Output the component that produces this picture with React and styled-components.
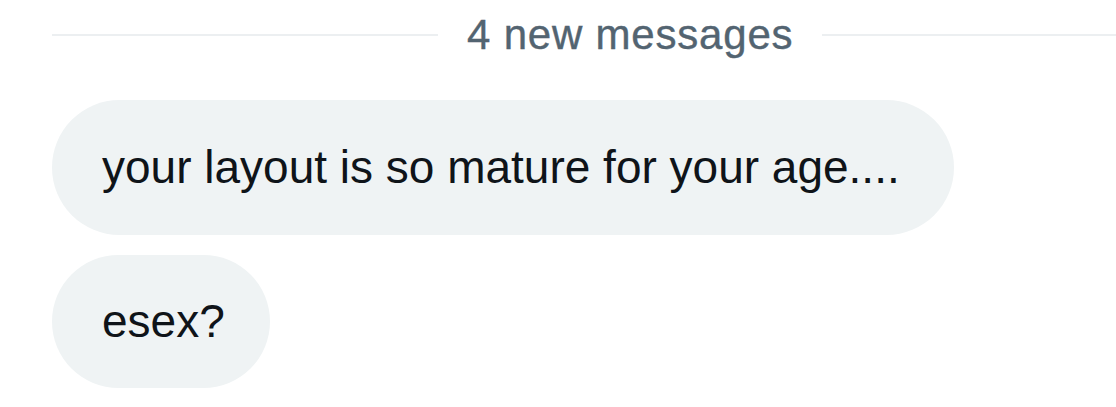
import React from 'react'
import styled, { createGlobalStyle } from 'styled-components'

const GlobalStyle = createGlobalStyle`
  body {
    margin: 0;
    background: #ffffff;
    font-family: 'Liberation Sans', Arial, sans-serif;
  }
`

const messages = ['your layout is so mature for your age....', 'esex?']

function App() {
  return (
    <>
      <GlobalStyle />
      <Thread>
        <Divider>
          <Rule $lead />
          <DividerLabel>4 new messages</DividerLabel>
          <Rule />
        </Divider>
        <Messages>
          {messages.map((text) => (
            <Bubble key={text}>{text}</Bubble>
          ))}
        </Messages>
      </Thread>
    </>
  )
}

export default App

const Thread = styled.div`
  width: 1116px;
  height: 407px;
  padding-left: 52px;
  box-sizing: border-box;
  overflow: hidden;
`

const Divider = styled.div`
  display: flex;
  align-items: center;
  gap: 29px;
  height: 68px;
  margin-top: 1px;
  margin-bottom: 31px;
`

const Rule = styled.div`
  flex: ${({ $lead }) => ($lead ? '0 0 386px' : '1')};
  height: 2px;
  background: #eceff1;
`

const DividerLabel = styled.span`
  font-size: 42px;
  line-height: 48px;
  letter-spacing: 0.8px;
  color: #536471;
  white-space: nowrap;
  -webkit-text-stroke: 0.4px #536471;
`

const Messages = styled.div`
  display: flex;
  flex-direction: column;
  align-items: flex-start;
  gap: 20px;
`

const Bubble = styled.div`
  background: #eff3f4;
  color: #0f1419;
  font-size: 46px;
  line-height: 55px;
  padding: 40px 54px 40px 50px;
  border-radius: 70px;
  white-space: nowrap;
  & + & {
    padding-top: 39px;
    padding-bottom: 39px;
    padding-right: 45px;
  }
`
